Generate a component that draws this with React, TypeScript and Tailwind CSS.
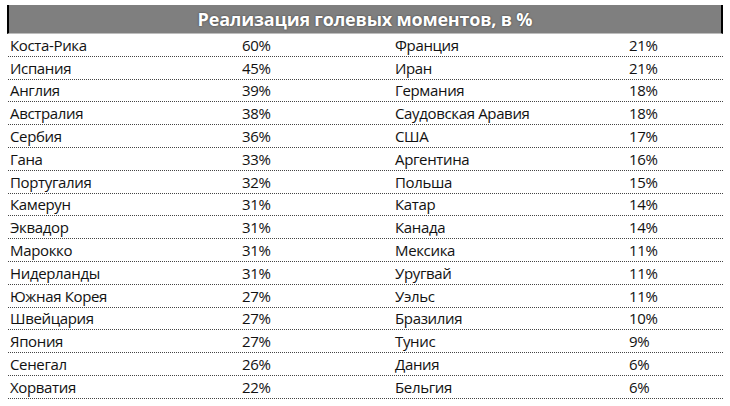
const rows: [string, string, string, string][] = [
  ["Коста-Рика", "60%", "Франция", "21%"],
  ["Испания", "45%", "Иран", "21%"],
  ["Англия", "39%", "Германия", "18%"],
  ["Австралия", "38%", "Саудовская Аравия", "18%"],
  ["Сербия", "36%", "США", "17%"],
  ["Гана", "33%", "Аргентина", "16%"],
  ["Португалия", "32%", "Польша", "15%"],
  ["Камерун", "31%", "Катар", "14%"],
  ["Эквадор", "31%", "Канада", "14%"],
  ["Марокко", "31%", "Мексика", "11%"],
  ["Нидерланды", "31%", "Уругвай", "11%"],
  ["Южная Корея", "27%", "Уэльс", "11%"],
  ["Швейцария", "27%", "Бразилия", "10%"],
  ["Япония", "27%", "Тунис", "9%"],
  ["Сенегал", "26%", "Дания", "6%"],
  ["Хорватия", "22%", "Бельгия", "6%"],
]

export default function App() {
  return (
    <div className="h-[406px] w-[730px] bg-white pl-[7px] pt-[5px] font-['Open_Sans',sans-serif]">
      <div className="w-[716px]">
        <div className="flex h-[29px] items-center justify-center border-b border-l-2 border-r-2 border-b-[#bdbdbd] border-l-black border-r-black bg-[#7f7f7f]">
          <span className="text-[18px] font-bold tracking-[-0.2px] text-white [text-shadow:0_0_2px_rgba(0,0,0,0.6)]">
            Реализация голевых моментов, в %
          </span>
        </div>
        <div className="pl-[1px]">
          {rows.map(([a, av, b, bv]) => (
            <div
              key={a}
              className="grid h-[22.8px] grid-cols-[232px_153px_234px_1fr] items-center border-b border-dotted border-[#444] pl-[2px] pt-[1px] text-[15px] leading-none text-[#111]"
            >
              <span className="tracking-[-0.35px]">{a}</span>
              <span className="tracking-[-0.3px]">{av}</span>
              <span className="tracking-[-0.35px]">{b}</span>
              <span className="tracking-[-0.3px]">{bv}</span>
            </div>
          ))}
        </div>
      </div>
    </div>
  )
}
